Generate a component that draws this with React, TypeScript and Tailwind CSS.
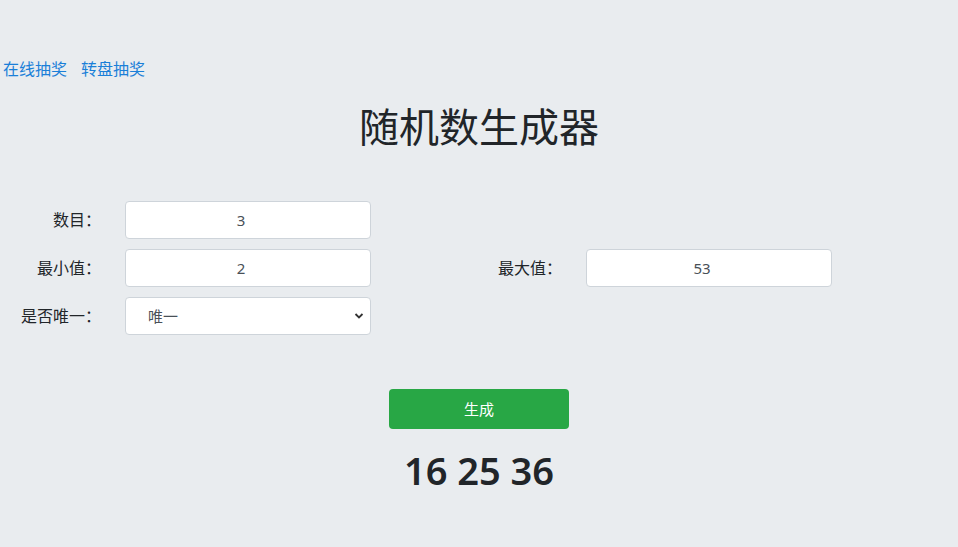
import React, { useState } from 'react';

const font = { fontFamily: '"Noto Sans", "Noto Sans CJK SC", sans-serif' };

const Label: React.FC<{ text: string; width: string }> = ({ text, width }) => (
  <label className={`${width} shrink-0 pr-[24px] text-right text-[16px] text-[#212529]`}>{text}</label>
);

const App: React.FC = () => {
  const [count, setCount] = useState('3');
  const [min, setMin] = useState('2');
  const [max, setMax] = useState('53');
  const [unique, setUnique] = useState('1');
  const [result, setResult] = useState<number[]>([16, 25, 36]);

  const generate = () => {
    const n = parseInt(count) || 0;
    const lo = parseInt(min) || 0;
    const hi = parseInt(max) || 0;
    const out: number[] = [];
    let guard = 0;
    while (out.length < n && guard < 10000) {
      guard++;
      const v = Math.floor(Math.random() * (hi - lo + 1)) + lo;
      if (unique === '1' && out.includes(v)) continue;
      out.push(v);
    }
    setResult(out.sort((a, b) => a - b));
  };

  const inputCls =
    'w-[246px] h-[38px] rounded-[4px] border border-[#ced4da] bg-white pr-[14px] text-center text-[15px] text-[#495057] outline-none';

  return (
    <div className="min-h-[547px] w-full bg-[#e9ecef] pt-[57px]" style={font}>
      <div className="flex gap-[14px] pl-[3px] text-[16px] leading-[24px] text-[#1a7fd8]">
        <a href="#">在线抽奖</a>
        <a href="#">转盘抽奖</a>
      </div>

      <h1 className="mt-[22px] text-center text-[40px] leading-[48px] font-normal text-[#212529]">随机数生成器</h1>

      <div className="mt-[50px] flex flex-col gap-[10px]">
        <div className="flex items-center">
          <Label text="数目：" width="w-[125px]" />
          <input className={inputCls} value={count} onChange={(e) => setCount(e.target.value)} />
        </div>
        <div className="flex items-center">
          <Label text="最小值：" width="w-[125px]" />
          <input className={inputCls} value={min} onChange={(e) => setMin(e.target.value)} />
          <Label text="最大值：" width="w-[215px]" />
          <input className={inputCls} value={max} onChange={(e) => setMax(e.target.value)} />
        </div>
        <div className="flex items-center">
          <Label text="是否唯一：" width="w-[125px]" />
          <div className="relative">
            <select
              className="h-[38px] w-[246px] appearance-none rounded-[4px] border border-[#ced4da] bg-white pl-[22px] text-[15px] text-[#495057] outline-none"
              value={unique}
              onChange={(e) => setUnique(e.target.value)}
            >
              <option value="1">唯一</option>
              <option value="0">不唯一</option>
            </select>
            <svg className="pointer-events-none absolute right-[7px] top-[15px]" width="10" height="8" viewBox="0 0 10 8">
              <path d="M1.5 2 L5 5.5 L8.5 2" fill="none" stroke="#333" strokeWidth="1.8" />
            </svg>
          </div>
        </div>
      </div>

      <div className="mt-[54px] flex justify-center">
        <button
          onClick={generate}
          className="h-[40px] w-[180px] rounded-[4px] bg-[#28a745] text-[15px] text-white"
        >
          生成
        </button>
      </div>

      <div className="mt-[19px] text-center text-[38px] leading-[45px] font-semibold text-[#212529]">
        {result.join(' ')}
      </div>
    </div>
  );
};

export default App;
